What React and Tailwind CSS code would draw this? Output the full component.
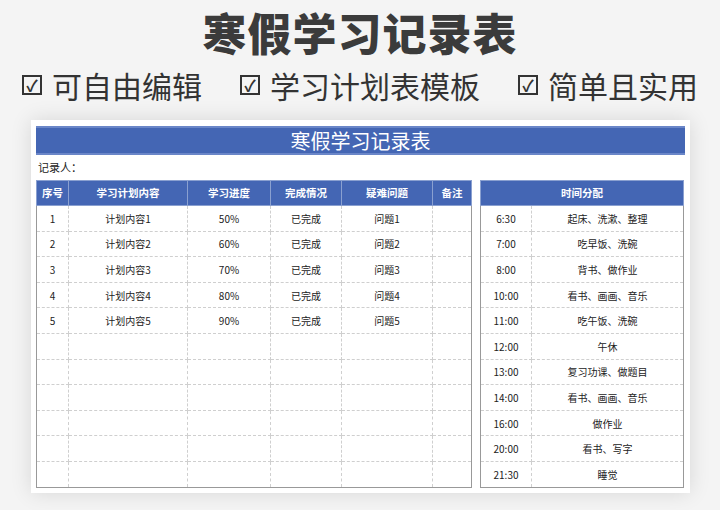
const F = { fontFamily: '"Noto Sans CJK SC","Microsoft YaHei",sans-serif' };
const left = [
  ["1","计划内容1","50%","已完成","问题1"],
  ["2","计划内容2","60%","已完成","问题2"],
  ["3","计划内容3","70%","已完成","问题3"],
  ["4","计划内容4","80%","已完成","问题4"],
  ["5","计划内容5","90%","已完成","问题5"],
  ...Array.from({length:6},()=>["","","","",""]),
];
const right = [["6:30","起床、洗漱、整理"],["7:00","吃早饭、洗碗"],["8:00","背书、做作业"],["10:00","看书、画画、音乐"],["11:00","吃午饭、洗碗"],["12:00","午休"],["13:00","复习功课、做题目"],["14:00","看书、画画、音乐"],["16:00","做作业"],["20:00","看书、写字"],["21:30","睡觉"]];
const widths = ["w-[32px]","w-[119px]","w-[83px]","w-[71px]","w-[91px]","w-[39px]"];
const heads = ["序号","学习计划内容","学习进度","完成情况","疑难问题","备注"];
const td = "border border-dashed border-[#cfcfcf] text-center text-[10px] text-[#222] h-[25.6px] p-0";
const th = "border border-[#8aa0d0] bg-[#4466b4] text-white text-[10.5px] font-bold h-[25px] p-0";
function Check(){return <span className="inline-flex w-[20px] h-[20px] border-2 border-[#333] items-center justify-center mr-[10px] text-[16px] leading-none font-bold">✓</span>}
export default function App(){
  return (
    <div style={F} className="w-[720px] h-[510px] bg-[#f4f4f4] overflow-hidden flex flex-col items-center">
      <div className="text-[44px] font-black text-[#3b3b3b] leading-[52px] mt-[6px] tracking-[1px]">寒假学习记录表</div>
      <div className="flex w-full justify-between px-[22px] mt-[12px] text-[30px] text-[#333] leading-none">
        <div className="flex items-center"><Check/>可自由编辑</div>
        <div className="flex items-center"><Check/>学习计划表模板</div>
        <div className="flex items-center"><Check/>简单且实用</div>
      </div>
      <div className="mt-[20px] w-[659px] h-[373px] bg-white shadow-[0_0_20px_rgba(0,0,0,0.12)] px-[5px] pt-[6px] self-start ml-[31px]">
        <div className="h-[29px] bg-[#4466b4] border-t-2 border-b-2 border-[#6a86c8] text-white text-[20px] flex items-center justify-center leading-none">寒假学习记录表</div>
        <div className="text-[11px] text-[#222] h-[25px] flex items-center pl-[2px]">记录人：</div>
        <div className="flex gap-[8px]">
          <table className="border-collapse border border-[#999] w-[435px] table-fixed">
            <colgroup>{widths.map((w,i)=><col key={i} className={w}/>)}</colgroup>
            <thead><tr>{heads.map((h,i)=><th key={i} className={th}>{h}</th>)}</tr></thead>
            <tbody>{left.map((r,i)=><tr key={i}>{[...r,""].map((c,j)=><td key={j} className={td}>{c}</td>)}</tr>)}</tbody>
          </table>
          <table className="border-collapse border border-[#999] w-[203px] table-fixed">
            <colgroup><col className="w-[51px]"/><col className="w-[152px]"/></colgroup>
            <thead><tr><th colSpan={2} className={th}>时间分配</th></tr></thead>
            <tbody>{right.map((r,i)=><tr key={i}><td className={td}>{r[0]}</td><td className={td}>{r[1]}</td></tr>)}</tbody>
          </table>
        </div>
      </div>
    </div>
  );
}
